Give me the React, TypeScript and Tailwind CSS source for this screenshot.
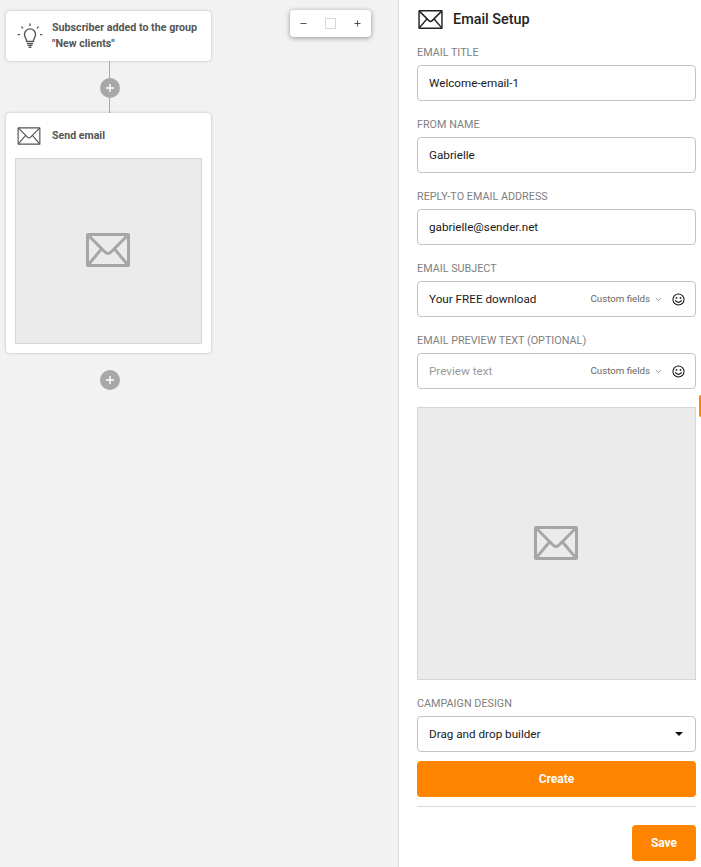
import { ChevronDown, Minus, Plus } from 'lucide-react';

const font = { fontFamily: 'Roboto, sans-serif' };

function MailIcon({ className, strokeWidth = 1.5 }: { className?: string; strokeWidth?: number }) {
  return (
    <svg viewBox="0 0 44 34" fill="none" stroke="currentColor" strokeWidth={strokeWidth} className={className}>
      <rect x="1.5" y="1.5" width="41" height="31" rx="0.5" />
      <path d="M2 2 L19 19 Q22 22 25 19 L42 2" />
      <path d="M2 32 L15.5 16" />
      <path d="M42 32 L28.5 16" />
    </svg>
  );
}

function BulbIcon() {
  return (
    <svg viewBox="0 0 26 26" fill="none" stroke="currentColor" strokeWidth="1.4" className="w-[26px] h-[26px] text-[#555]">
      <path d="M9.6 18.5 C9.6 15.5 7.5 14.5 7.5 11.2 C7.5 8.2 10 5.9 13 5.9 C16 5.9 18.5 8.2 18.5 11.2 C18.5 14.5 16.4 15.5 16.4 18.5 Z" />
      <path d="M10 20.6 H16 M10.6 22.4 H15.4 M11.6 24.2 H14.4" />
      <path d="M13 0.6 V3 M4.4 3.6 L6 5.4 M21.6 3.6 L20 5.4 M0.6 11.6 H3 M23 11.6 H25.4" />
    </svg>
  );
}

function Smiley() {
  return (
    <svg viewBox="0 0 14 14" fill="none" stroke="#111" strokeWidth="1.1" className="w-[13px] h-[13px] ml-[9px]">
      <circle cx="7" cy="7" r="6" />
      <circle cx="4.9" cy="5.3" r="0.9" fill="#111" stroke="none" />
      <circle cx="9.1" cy="5.3" r="0.9" fill="#111" stroke="none" />
      <path d="M3.4 8 Q7 12.2 10.6 8" />
    </svg>
  );
}

function AddButton() {
  return (
    <div className="w-5 h-5 ml-[3px] rounded-full bg-[#a8a8a8] flex items-center justify-center text-white">
      <Plus className="w-3 h-3" strokeWidth={3} />
    </div>
  );
}

function Field({ label, value, placeholder, custom }: { label: string; value?: string; placeholder?: string; custom?: boolean }) {
  return (
    <div className="mb-4">
      <div className="text-[10.8px] leading-[13px] h-[14px] pt-px mb-[6px] text-[#808080] uppercase">{label}</div>
      <div className="h-9 border border-[#c4c4c4] rounded-[4px] flex items-center pl-[11px] pr-[10px] bg-white">
        <span className={`text-[11.7px] flex-1 pt-px ${value ? 'text-[#1a1a1a]' : 'text-[#9a9a9a]'}`}>{value || placeholder}</span>
        {custom && (
          <>
            <span className="text-[9.7px] text-[#666] pt-px">Custom fields</span>
            <ChevronDown className="w-[9px] h-[9px] text-[#777] ml-[4px]" />
            <Smiley />
          </>
        )}
      </div>
    </div>
  );
}

export default function App() {
  return (
    <div className="h-[867px] w-[701px] flex overflow-hidden bg-[#f2f2f2] relative" style={font}>
      <div className="w-[399px] pt-[11px] pl-[6px] border-r border-[#dcdcdc] shrink-0">
        <div className="w-[205px] flex flex-col items-center">
          <div className="w-full h-[50px] bg-white rounded-[4px] shadow-[0_0_3px_rgba(0,0,0,0.25)] flex items-center pl-[11px]">
            <BulbIcon />
            <div className="ml-[9px] text-[10.7px] leading-4 font-bold text-[#555]">
              <div>Subscriber added to the group</div>
              <div>"New clients"</div>
            </div>
          </div>
          <div className="w-px h-[17px] ml-[2px] bg-[#a8a8a8]" />
          <AddButton />
          <div className="w-px h-[15px] ml-[2px] bg-[#a8a8a8]" />
          <div className="w-full h-[240px] bg-white rounded-[4px] shadow-[0_0_3px_rgba(0,0,0,0.25)] px-[9px] pt-[14px]">
            <div className="flex items-center h-[18px] pl-[2px]">
              <MailIcon className="w-6 h-[18px] text-[#555]" strokeWidth={2.2} />
              <span className="ml-[11px] text-[10.6px] font-bold text-[#555]">Send email</span>
            </div>
            <div className="mt-[13px] h-[186px] w-[187px] bg-[#ebebeb] border border-[#d6d6d6] flex items-center justify-center">
              <MailIcon className="w-[44px] h-[34px] -ml-[1px] -mt-[3px] text-[#a6a6a6]" strokeWidth={3} />
            </div>
          </div>
          <div className="h-[17px]" />
          <AddButton />
        </div>
      </div>

      <div className="absolute left-[290px] top-[10px] w-[81px] h-[27px] bg-white rounded-[4px] shadow-[0_1px_5px_rgba(0,0,0,0.4)] flex items-center justify-between px-[9px] text-[#222]">
        <Minus className="w-[9px] h-[9px]" strokeWidth={2} />
        <div className="w-[11px] h-[11px] border border-[#d8d8d8]" />
        <Plus className="w-[9px] h-[9px]" strokeWidth={2} />
      </div>

      <div className="flex-1 bg-white pl-[18px] pr-[5px] relative">
        <div className="flex items-center h-[45px] pb-[7px] pl-px">
          <MailIcon className="w-[25px] h-[19px] text-[#222]" strokeWidth={2.6} />
          <span className="ml-[10px] text-[14.4px] font-medium text-[#222] pt-[2px]">Email Setup</span>
        </div>
        <Field label="Email title" value="Welcome-email-1" />
        <Field label="From name" value="Gabrielle" />
        <Field label="Reply-to email address" value="gabrielle@sender.net" />
        <Field label="Email subject" value="Your FREE download" custom />
        <Field label="Email preview text (optional)" placeholder="Preview text" custom />
        <div className="h-[273px] bg-[#ebebeb] border border-[#d6d6d6] flex items-center justify-center mt-[18px]">
          <MailIcon className="w-[44px] h-[34px] -ml-[2px] -mt-px text-[#a6a6a6]" strokeWidth={3} />
        </div>
        <div className="mt-4 text-[10.8px] leading-[13px] h-[14px] pt-px mb-[6px] text-[#808080] uppercase">Campaign design</div>
        <div className="h-9 border border-[#c4c4c4] rounded-[4px] flex items-center justify-between pl-[11px] pr-[12px]">
          <span className="text-[11.7px] text-[#1a1a1a] pt-[2px]">Drag and drop builder</span>
          <div className="w-0 h-0 border-x-[4px] border-x-transparent border-t-[4px] border-t-[#111]" />
        </div>
        <button className="block w-full h-9 mt-[9px] bg-[#ff8400] rounded-[4px] text-white text-[12px] font-bold">Create</button>
        <div className="h-px bg-[#d9d9d9] mt-[9px]" />
        <div className="flex justify-end mt-[18px]">
          <button className="w-[64px] h-9 bg-[#ff8400] rounded-[4px] text-white text-[12px] font-bold">Save</button>
        </div>
        <div className="absolute right-0 top-[395px] w-[2px] h-[22px] bg-[#ff8400] rounded-l-[2px]" />
      </div>
    </div>
  );
}
